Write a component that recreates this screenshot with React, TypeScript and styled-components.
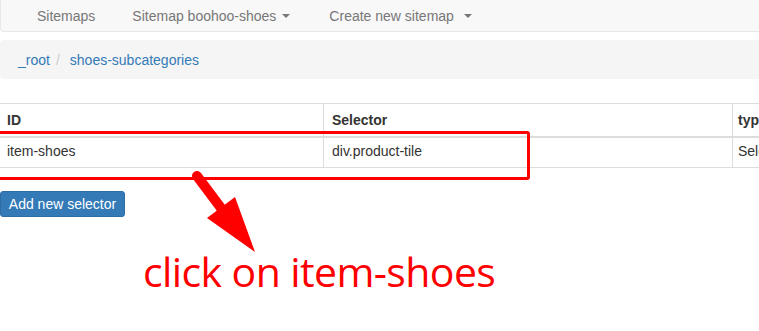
import React from 'react';
import styled, { createGlobalStyle } from 'styled-components';

const GlobalStyle = createGlobalStyle`
    html, body {
        margin: 0;
        padding: 0;
        background: #fff;
        overflow: hidden;
    }
    body {
        font-family: "Liberation Sans", Arial, sans-serif;
        font-size: 14px;
        line-height: 20px;
        color: #333;
    }
`;

const Page = styled.div`
    position: relative;
    width: 759px;
    height: 331px;
    overflow: hidden;
`;

const Navbar = styled.nav`
    height: 31px;
    background-color: #f8f8f8;
    border: 1px solid #e7e7e7;
    border-top: none;
    border-radius: 0 0 4px 4px;
    margin-right: -10px;
    display: flex;
    align-items: center;
    padding-left: 18px;
`;

const NavLink = styled.a`
    color: #777;
    padding: 0 18px;
    text-decoration: none;
    display: flex;
    align-items: center;
    white-space: nowrap;
    & + & {
        margin-left: 1px;
    }
`;

const Caret = styled.span<{ $gap: number }>`
    display: inline-block;
    width: 0;
    height: 0;
    border-top: 4px solid #777;
    border-left: 4px solid transparent;
    border-right: 4px solid transparent;
    margin: 0 2px 0 ${({ $gap }) => $gap}px;
`;

const Breadcrumb = styled.ol`
    list-style: none;
    margin: 8px -10px 0 0;
    padding: 10px 18px 9px;
    background-color: #f5f5f5;
    border-radius: 4px;
    display: flex;
`;

const Crumb = styled.li`
    color: #337ab7;
    & + &::before {
        content: '/';
        color: #ccc;
        padding: 0 10px 0 6px;
    }
`;

const Table = styled.table`
    margin-top: 24px;
    margin-left: -1px;
    width: 860px;
    border-collapse: collapse;
    border-top: 1px solid #ddd;
`;

const Th = styled.th<{ w?: number }>`
    width: ${({ w }) => (w ? `${w}px` : 'auto')};
    text-align: left;
    font-weight: bold;
    color: #333;
    padding: 6px 8px;
    border-left: 1px solid #ddd;
    border-bottom: 2px solid #ddd;
    &:first-child {
        border-left: none;
    }
    &:last-child {
        padding-left: 5px;
    }
`;

const Td = styled.td`
    color: #333;
    padding: 3px 8px 6px;
    border-left: 1px solid #ddd;
    border-bottom: 1px solid #ddd;
    &:first-child {
        border-left: none;
    }
    &:last-child {
        padding-left: 5px;
    }
`;

const Button = styled.button`
    margin-top: 23px;
    display: block;
    font-family: "Liberation Sans", Arial, sans-serif;
    font-size: 14px;
    line-height: 20px;
    color: #fff;
    background-color: #337ab7;
    border: 1px solid #2e6da4;
    border-radius: 3px;
    padding: 2px 6px;
    width: 125px;
    text-align: center;
    cursor: pointer;
`;

const Note = styled.div`
    margin: 30px 0 0 143px;
    font-family: "Open Sans", sans-serif;
    font-size: 41px;
    line-height: 48px;
    letter-spacing: -0.6px;
    color: #ff0000;
    white-space: nowrap;
`;

const Highlight = styled.div`
    position: absolute;
    left: -4px;
    top: 131px;
    width: 528px;
    height: 43px;
    border: 3px solid #ff0000;
    border-radius: 3px;
`;

const Arrow = styled.svg`
    position: absolute;
    left: 185px;
    top: 165px;
`;

const App: React.FC = () => {
    return (
        <Page>
            <GlobalStyle />
            <Navbar>
                <NavLink href="#">Sitemaps</NavLink>
                <NavLink href="#">
                    Sitemap boohoo-shoes
                    <Caret $gap={6} />
                </NavLink>
                <NavLink href="#">
                    Create new sitemap
                    <Caret $gap={10} />
                </NavLink>
            </Navbar>
            <Breadcrumb>
                <Crumb>_root</Crumb>
                <Crumb>shoes-subcategories</Crumb>
            </Breadcrumb>
            <Table>
                <thead>
                    <tr>
                        <Th w={308}>ID</Th>
                        <Th w={392}>Selector</Th>
                        <Th>type</Th>
                    </tr>
                </thead>
                <tbody>
                    <tr>
                        <Td>item-shoes</Td>
                        <Td>div.product-tile</Td>
                        <Td>SelectorElement</Td>
                    </tr>
                </tbody>
            </Table>
            <Button>Add new selector</Button>
            <Note>click on item-shoes</Note>
            <Highlight />
            <Arrow width="80" height="95" viewBox="185 165 80 95">
                <line x1="197" y1="176" x2="224" y2="212" stroke="#ff0000" strokeWidth="10" strokeLinecap="round" />
                <polygon points="207,218 235,197 255,252" fill="#ff0000" />
            </Arrow>
        </Page>
    );
};

export default App;
